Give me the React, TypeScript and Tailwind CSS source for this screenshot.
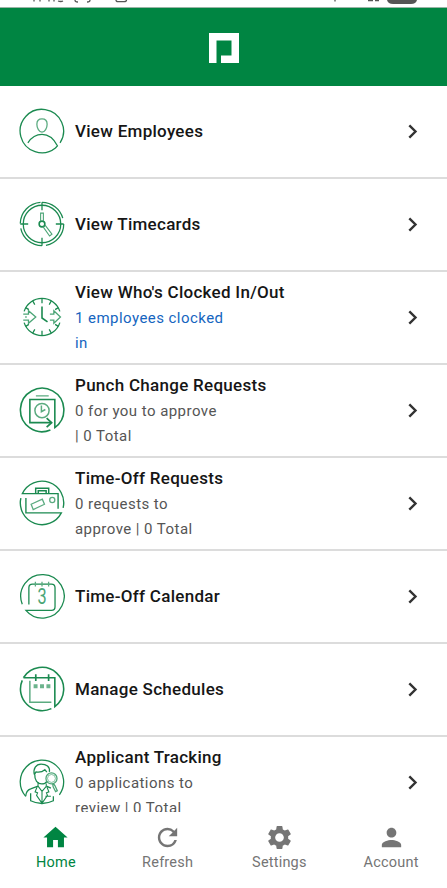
import type { ReactNode } from "react";
import { MdHome, MdPerson, MdRefresh, MdSettings } from "react-icons/md";

type MenuItem = {
  title: string;
  lines?: string[];
  highlight?: boolean;
  icon: ReactNode;
};

function LineIcon({ children }: { children: ReactNode }) {
  return (
    <svg
      viewBox="-0.3 -0.3 46.6 46.6"
      className="h-[46px] w-[46px] shrink-0"
      fill="none"
      stroke="#1b8a50"
      strokeWidth="1.3"
    >
      {children}
    </svg>
  );
}

const items: MenuItem[] = [
  {
    title: "View Employees",
    icon: (
      <LineIcon>
        <path d="M41.3 35A22 22 0 1 0 36.6 40.2L38.6 38C35 31 29.5 26.5 23 26.5S12 30 8.7 35" />
        <path
          d="M23 10.7c3.3 0 5.2 2.3 5.2 5.4 0 4.1-2.3 8.1-5.2 8.1s-5.2-4-5.2-8.1c0-3.1 1.9-5.4 5.2-5.4Z"
          stroke="#5bab80"
        />
      </LineIcon>
    ),
  },
  {
    title: "View Timecards",
    icon: (
      <LineIcon>
        <circle cx="23" cy="23" r="19" />
        <path d="M1 22.5A22 22 0 0 1 21.5 1M23 1a22 22 0 0 1 21 16M45 23A22 22 0 0 1 27 44.7M23 45A22 22 0 0 1 1.5 27.5" />
        <path d="M23 1v8M23 37v8M1 23h8M37 23h8" />
        <circle cx="23" cy="23" r="2.9" strokeWidth="1.6" />
        <path d="M21.6 20v-8h2.8v8M24 25.6l6.7 9.6 2.4-1.8-7-9.2" stroke="#4ba576" strokeWidth="1.1" />
      </LineIcon>
    ),
  },
  {
    title: "View Who's Clocked In/Out",
    lines: ["1 employees clocked", "in"],
    highlight: true,
    icon: (
      <LineIcon>
        <path d="M4.9 17.3a19 19 0 0 1 36.2 0M4.9 28.7a19 19 0 0 0 36.2 0" />
        <path d="M23 4v5M13.5 6.5l2.2 4M32.5 6.5l-2.2 4M6.5 13.5l3.2 2M39.5 13.5l-3.2 2M23 42v-5M13.5 39.5l2.2-4M32.5 39.5l-2.2-4M6.5 32.5l3.2-2M39.5 32.5l-3.2-2" />
        <path d="M23 12.3V24l5.6 4" strokeWidth="1.6" />
        <path
          d="M4 20h5.3v-3.4L16.700 23l-7.400 6.400v-3.200H4M6 23h1.500M31 20h4v-3.400l6.700 6.400-6.700 6.400v-3.200h-4"
          stroke="#4ba576"
        />
      </LineIcon>
    ),
  },
  {
    title: "Punch Change Requests",
    lines: ["0 for you to approve", "| 0 Total"],
    icon: (
      <LineIcon>
        <path d="M31.5 43.3A22 22 0 1 1 36 40.8V12.3H10.7v23.5h21.8" strokeWidth="1.6" />
        <path d="m27.7 31.3 5 4.5-5 4.5" strokeWidth="1.8" />
        <g stroke="#5bab80" strokeWidth="1.5">
          <path d="M16.8 8.7h13M22.4 18.5v6.2l4-2.2" />
          <circle cx="23" cy="23.6" r="7.2" />
        </g>
      </LineIcon>
    ),
  },
  {
    title: "Time-Off Requests",
    lines: ["0 requests to", "approve | 0 Total"],
    icon: (
      <LineIcon>
        <path
          d="M44.4 28A22 22 0 0 0 3.1 13.5h36.2v15.2M1.6 18A22 22 0 0 0 42.6 33H6.7V18"
          strokeWidth="1.4"
        />
        <path d="M16.6 13.5V8.1h13.2v5.4M19.2 13.5v-2.8h8v2.8" strokeWidth="1.5" />
        <g stroke="#5bab80">
          <path d="m12 24.3 11.3-5.2 2.2 5.2-11.4 5.3Z" />
          <circle cx="33.4" cy="20" r="2.6" />
        </g>
      </LineIcon>
    ),
  },
  {
    title: "Time-Off Calendar",
    icon: (
      <LineIcon>
        <path d="M3 31.3A22 22 0 1 1 6.7 37.5H32.5q3.700 0 3.700-3.700V14.7Q36.2 11 32.5 11H13.4q-3.700 0-3.700 3.700v17" />
        <path d="M16.3 8.5v5M23 8.5v5M29.7 8.5v5" stroke="#5bab80" />
        <text
          transform="translate(23 31.6) scale(.75 1)"
          textAnchor="middle"
          fontSize="22"
          fontFamily="Roboto, sans-serif"
          fill="#4ba576"
          stroke="none"
        >
          3
        </text>
      </LineIcon>
    ),
  },
  {
    title: "Manage Schedules",
    icon: (
      <LineIcon>
        <path d="M32.5 42.9A22 22 0 0 1 3 14.2M4.2 11.6A22 22 0 1 1 36 40.8V11.6H4.2" strokeWidth="1.6" />
        <path d="M16.7 8v7M29.7 8v7" strokeWidth="1.7" />
        <path d="M10.7 14.7v21.8h21.8" stroke="#5bab80" strokeWidth="1.5" />
        <path d="M14.5 18.2h4v4h-4zM21 18.2h4v4h-4zM27.5 18.2h4v4h-4z" fill="#6cb48d" stroke="none" />
      </LineIcon>
    ),
  },
  {
    title: "Applicant Tracking",
    lines: ["0 applications to", "review | 0 Total"],
    icon: (
      <LineIcon>
        <path d="M6.5 37.5A22 22 0 1 1 40.6 36" />
        <path d="M6.5 37.5c.3-4.5 2-6.5 5-7.5l7.500-2.800M27.500 27.200l4.500 2M11.500 34.500V42q11.500 5.600 23 0v-4.500" />
        <path
          d="M19 27v-4M27.3 27.500v-3M19 27.200l4 5.300 4.300-5M18 28l-2 5 2.500 1-1 2.500 5.500 8 5.500-8-1-2.500 2.500-1-2-5M23 32.500v12M26.500 37.500h5.500"
          strokeWidth="1.1"
        />
        <path d="M15.3 15.5c-1.600-6 1.700-10.700 6.700-10.700 5.500 0 9.300 2.800 8.500 8M15.300 15.500l1.600-2.700c3.500.6 7-.5 9-2.300l2 2.500M15.700 15.500c-.4 5.500 2.800 9.500 7 9.500 2.300 0 4.300-1.200 5.600-3" />
        <g stroke="#4ba576">
          <circle cx="32.6" cy="19.4" r="5.600" />
          <circle cx="32.6" cy="19.4" r="4" strokeWidth=".7" />
          <path d="m33.800 25 .5 2.800 2.500 5 1.700-.9-2.300-5-1.500-2.300" />
        </g>
      </LineIcon>
    ),
  },
];

const tabs = [
  { label: "Home", Icon: MdHome, active: true },
  { label: "Refresh", Icon: MdRefresh },
  { label: "Settings", Icon: MdSettings },
  { label: "Account", Icon: MdPerson },
];

function StatusBar() {
  return (
    <div className="h-2 shrink-0 border-b border-[#9ab5a6] bg-white">
      <svg viewBox="0 0 447 7" className="block h-[7px] w-full" fill="none" stroke="#555" strokeWidth="1.3">
        <path d="M34 0v1.500M40 0v1.500M49 0v1.500M54 0v1.500M58 1q3 1 5 0M75 0q0 2 3 2M90 0q0 2-3 2M116 0q0 1.700 2 1.700h6q2.500 0 2.500-1.700M335 0v1.500M368 .5h5M375 .5h4" />
        <path d="M387 0h30q-1 4-6 4h-18q-5 0-6-4Z" fill="#555" stroke="none" />
      </svg>
    </div>
  );
}

function MenuRow({ item }: { item: MenuItem }) {
  return (
    <li className="flex h-[93px] shrink-0 items-center border-b-2 border-[#dcdcdc] pb-px pl-[19px] pr-[29px]">
      {item.icon}
      <div className="ml-[10px] flex-1">
        <div className="text-[17px] font-medium leading-[27px] tracking-[0.28px] text-[#161616]">
          {item.title}
        </div>
        {item.lines?.map((line) => (
          <div
            key={line}
            className={
              item.highlight
                ? "text-[15px] leading-[25px] tracking-[0.45px] text-[#1565c0]"
                : "text-[15px] leading-[25px] tracking-[0.45px] text-[#555]"
            }
          >
            {line}
          </div>
        ))}
      </div>
      <svg viewBox="0 0 10 16" className="h-4 w-[10px]" fill="none" stroke="#333" strokeWidth="2.4">
        <path d="m1.300 2.300 6.200 6.200-6.200 6.200" />
      </svg>
    </li>
  );
}

export default function App() {
  return (
    <div className="flex h-[888px] w-[447px] flex-col overflow-hidden bg-white font-['Roboto',sans-serif]">
      <StatusBar />
      <header className="flex h-[78px] shrink-0 items-center justify-center bg-[#008542]">
        <svg viewBox="0 0 30 30" className="mt-[2px] h-[30px] w-[30px]" fill="#fff">
          <path d="M0 0h30v30H12v-7.500h10.500v-15H7.500V30H0Z" />
        </svg>
      </header>

      <ul className="flex min-h-0 flex-1 flex-col overflow-hidden">
        {items.map((item) => (
          <MenuRow key={item.title} item={item} />
        ))}
      </ul>

      <nav className="grid h-[76px] shrink-0 grid-cols-4 bg-white">
        {tabs.map(({ label, Icon, active }) => (
          <div
            key={label}
            className={
              active
                ? "flex flex-col items-center pt-[11px] text-[#008542]"
                : "flex flex-col items-center pt-[11px] text-[#757575]"
            }
          >
            <Icon size={29} />
            <span className="mt-px text-[14.5px] leading-5 tracking-[0.2px]">{label}</span>
          </div>
        ))}
      </nav>
    </div>
  );
}
